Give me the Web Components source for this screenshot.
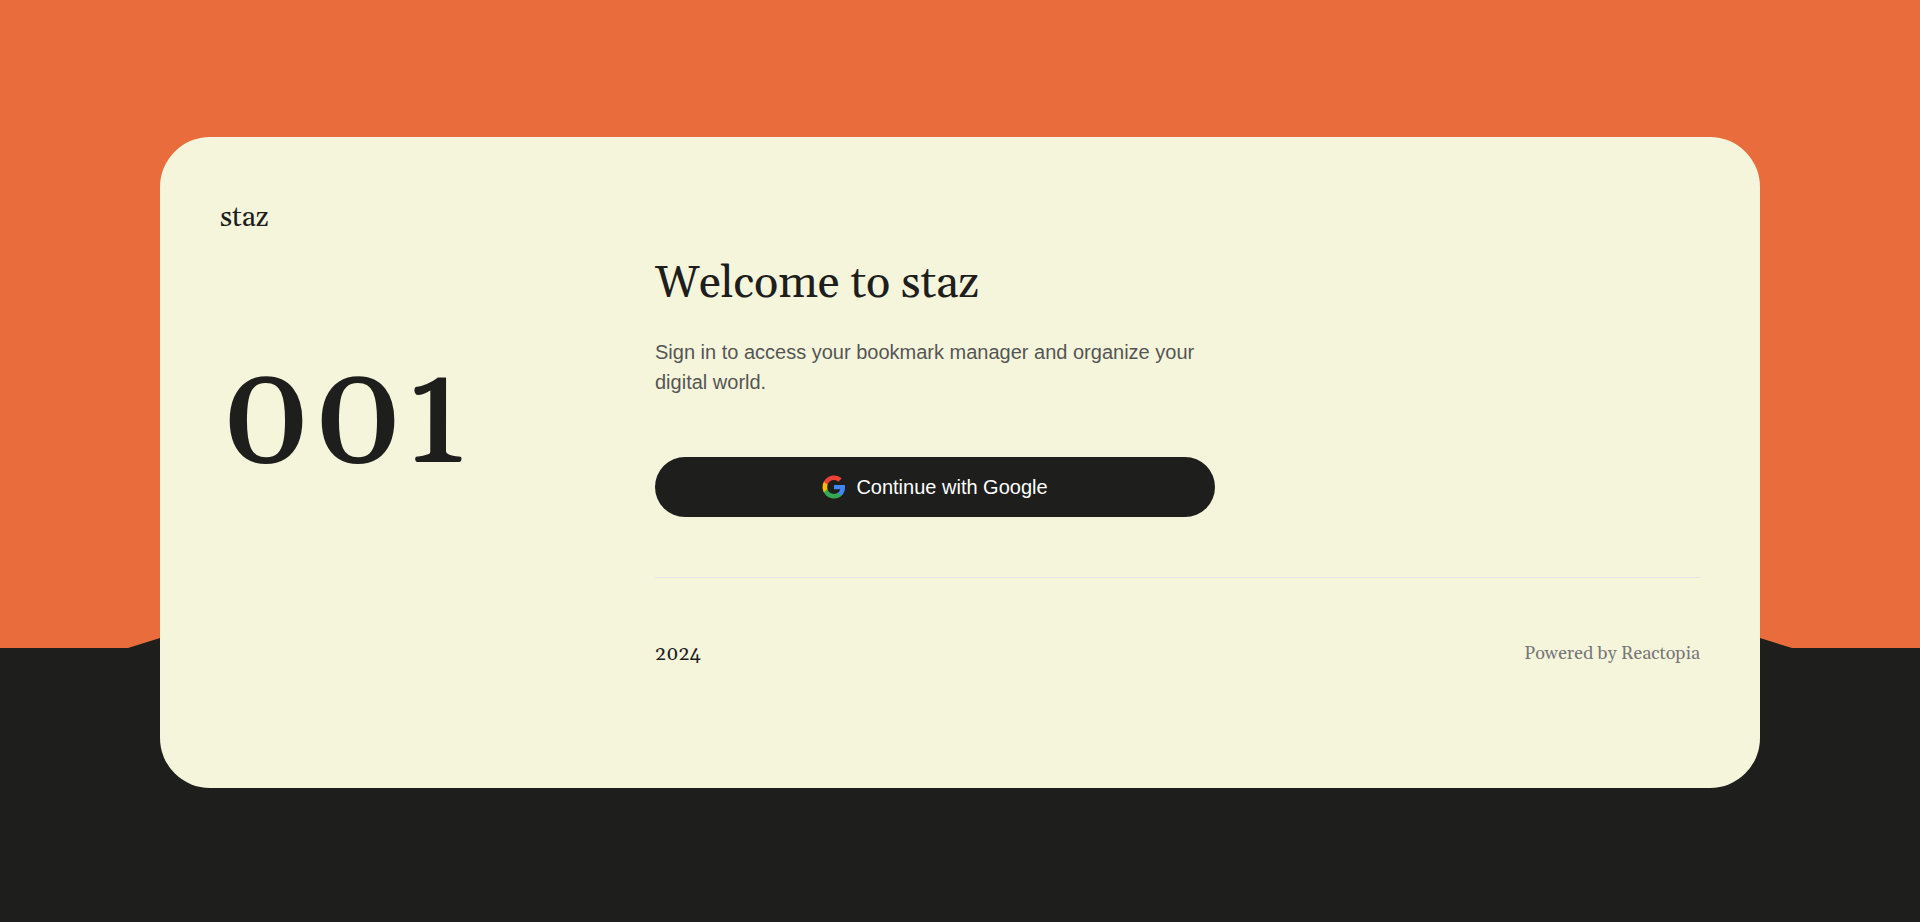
<!DOCTYPE html>
<html lang="en">
<head>
<meta charset="utf-8">
<title>staz</title>
<style>
body { margin: 0; }
</style>
</head>
<body>
<staz-page>
  <staz-card>
    <span slot="brand">staz</span>
    <span slot="number">001</span>
    <h1 slot="title">Welcome to staz</h1>
    <p slot="text">Sign in to access your bookmark manager and organize your digital world.</p>
    <google-button slot="action">Continue with Google</google-button>
    <staz-footer slot="footer"><span slot="year">2024</span><span slot="credit">Powered by Reactopia</span></staz-footer>
  </staz-card>
</staz-page>
<script>
const define = (name, html) => {
  const template = document.createElement('template');
  template.innerHTML = html;
  customElements.define(name, class extends HTMLElement {
    constructor() {
      super();
      this.attachShadow({ mode: 'open' }).append(template.content.cloneNode(true));
    }
  });
};

define('staz-page', `
<style>
:host {
  --ink: #1e1e1c; --paper: #f5f5dc; --accent: #e96d3c;
  --serif: Georgia, Gelasio, "DejaVu Serif", serif;
  --sans: "Liberation Sans", Arial, sans-serif;
  display: grid; align-items: center; position: relative; isolation: isolate;
  box-sizing: border-box; min-height: 100vh; padding: 64px 160px 61px;
  background: var(--accent); color: var(--ink); font-family: var(--serif);
}
.ground {
  position: absolute; z-index: -1; inset: auto 0 0; height: 534px;
  background: var(--ink);
  clip-path: polygon(0 260px, 128px 260px, 50% 0, calc(100% - 128px) 260px, 100% 260px, 100% 100%, 0 100%);
}
</style>
<div class="ground"></div>
<slot></slot>`);

define('staz-card', `
<style>
:host {
  display: grid; grid-template-columns: 355px minmax(0, 1fr); gap: 80px;
  box-sizing: border-box; padding: 60px; border-radius: 50px;
  background: var(--paper);
}
.side { display: flex; flex-direction: column; gap: 108px; }
.main { display: flex; flex-direction: column; padding: 54px 0 58px; }
::slotted([slot=brand]) { font-size: 28px; line-height: 42px; }
::slotted([slot=number]) { font-size: 146px; line-height: 146px; font-weight: 500; }
::slotted([slot=title]) { margin: 0 0 20px; font-size: 45px; line-height: 66px; font-weight: 400; }
::slotted([slot=text]) { max-width: 560px; margin: 0 0 60px; font: 20px/30px var(--sans); color: #555; }
::slotted([slot=action]) { max-width: 560px; }
</style>
<div class="side"><slot name="brand"></slot><slot name="number"></slot></div>
<main class="main"><slot name="title"></slot><slot name="text"></slot><slot name="action"></slot><slot name="footer"></slot></main>`);

define('google-button', `
<style>
:host { display: block; }
button {
  display: flex; align-items: center; justify-content: center; gap: 10px;
  width: 100%; height: 60px; padding: 0; border: 0; border-radius: 30px;
  background: var(--ink); color: #fff; font: 20px/30px var(--sans); cursor: pointer;
}
svg { width: 24px; height: 24px; }
</style>
<button type="button">
<svg viewBox="0.5 0.5 23 23" aria-hidden="true">
<path fill="#4285f4" d="M22.56 12.25c0-.78-.07-1.53-.2-2.25H12v4.26h5.92c-.26 1.37-1.04 2.53-2.21 3.31v2.77h3.57c2.08-1.92 3.28-4.74 3.28-8.09z"/>
<path fill="#34a853" d="M12 23c2.97 0 5.46-.98 7.28-2.66l-3.57-2.77c-.98.66-2.23 1.06-3.71 1.06-2.86 0-5.29-1.93-6.16-4.53H2.18v2.84C3.99 20.53 7.7 23 12 23z"/>
<path fill="#fbbc05" d="M5.84 14.09c-.22-.66-.35-1.36-.35-2.09s.13-1.43.35-2.09V7.07H2.18C1.43 8.55 1 10.22 1 12s.43 3.45 1.18 4.93l2.85-2.22.81-.62z"/>
<path fill="#ea4335" d="M12 5.38c1.62 0 3.06.56 4.21 1.64l3.15-3.15C17.45 2.09 14.97 1 12 1 7.7 1 3.99 3.47 2.18 7.07l3.66 2.84c.87-2.6 3.3-4.53 6.16-4.53z"/>
</svg>
<span><slot></slot></span></button>`);

define('staz-footer', `
<style>
:host {
  display: flex; align-items: center; justify-content: space-between;
  margin-top: 60px; padding-top: 60px; border-top: 1px solid #e5e5e5;
}
::slotted([slot=year]) { font-size: 20px; line-height: 32px; }
::slotted([slot=credit]) { font-size: 18px; line-height: 32px; color: #777; }
</style>
<slot name="year"></slot><slot name="credit"></slot>`);
</script>
</body>
</html>
